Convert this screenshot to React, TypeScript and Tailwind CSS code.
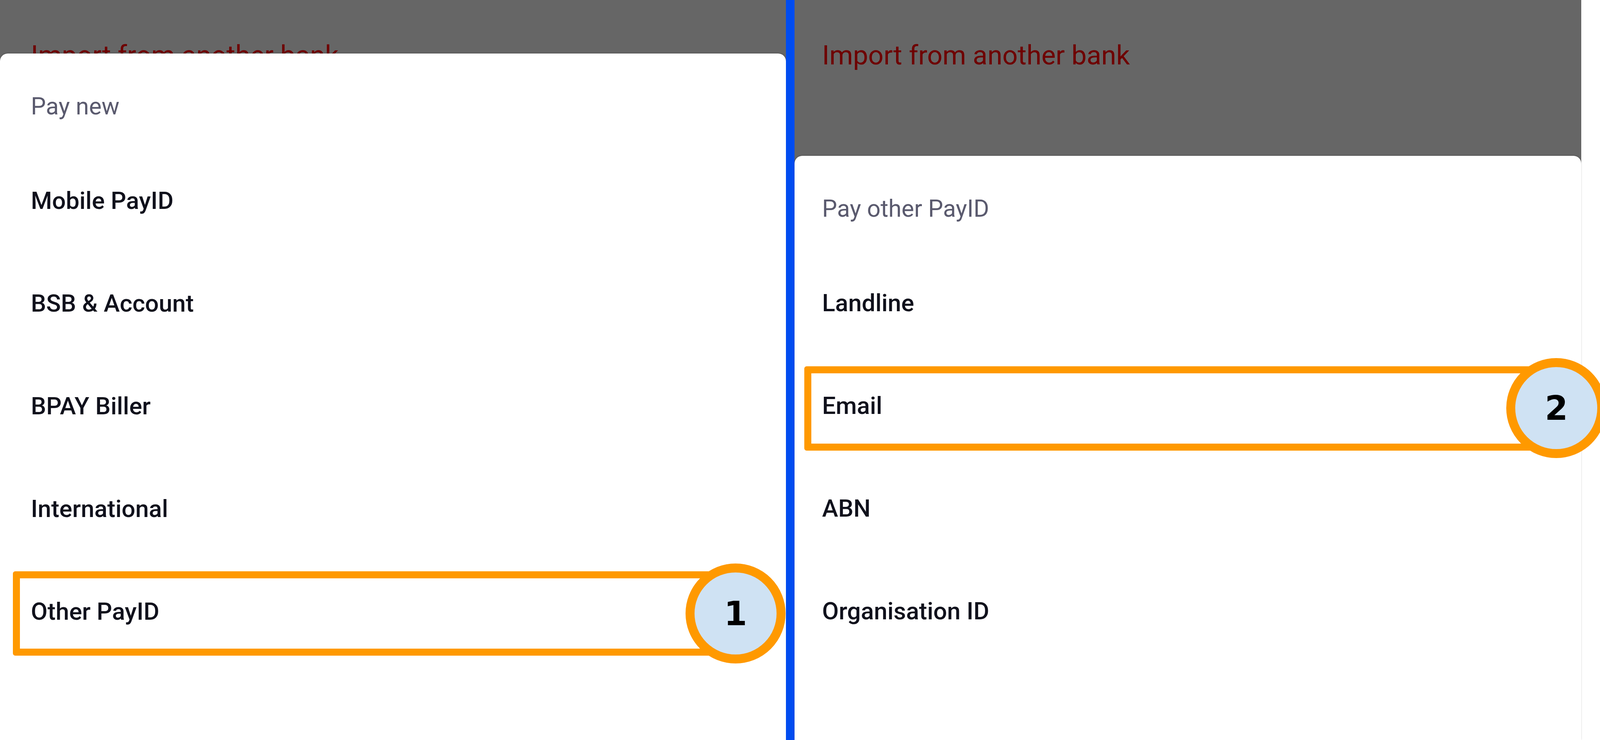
import React from "react";

type Marker = { n: number; box: string; circle: string };

const leftItems = ["Mobile PayID", "BSB & Account", "BPAY Biller", "International", "Other PayID"];
const rightItems = ["Landline", "Email", "ABN", "Organisation ID"];

// Orange highlight frame plus the numbered step bubble
const Callout: React.FC<Marker> = ({ n, box, circle }) => (
  <>
    <div className={`absolute h-[216px] rounded-[6px] border-[18px] border-[#ff9900] ${box}`} />
    <div
      className={`absolute flex h-[256px] w-[256px] items-center justify-center rounded-full border-[23px] border-[#ff9900] bg-[#cfe2f3] ${circle}`}
    >
      <span className="font-['DejaVu_Sans',sans-serif] text-[85px] font-bold leading-none text-black">{n}</span>
    </div>
  </>
);

const Sheet: React.FC<{
  title: string;
  items: string[];
  marked: string;
  marker: Marker;
  pad: string;
}> = ({ title, items, marked, marker, pad }) => (
  <div className="flex-1 rounded-t-[20px] bg-white shadow-[0_-1px_3px_rgba(0,0,0,0.25)]">
    <div className={`h-[245px] pt-[99px] text-[61px] leading-[72px] text-[#5a5a6e] ${pad}`}>{title}</div>
    {items.map((item) => (
      <div
        key={item}
        className={`relative h-[263px] whitespace-nowrap text-[62px] font-medium leading-[263px] text-[#10111c] ${pad}`}
      >
        {item}
        {item === marked && <Callout {...marker} />}
      </div>
    ))}
  </div>
);

const App: React.FC = () => {
  return (
    <div className="flex h-[1895px] w-full overflow-hidden bg-white font-['Roboto',sans-serif]">
      {/* Left screen */}
      <div className="flex w-[49.12%] shrink-0 flex-col bg-[#666666]">
        <div className="h-[137px] overflow-hidden whitespace-nowrap pl-[3.93%] pt-[102px] text-[69px] leading-[80px] text-[#6e0000]">
          Import from another bank
        </div>
        <Sheet
          title="Pay new"
          items={leftItems}
          marked="Other PayID"
          pad="pl-[3.93%]"
          marker={{ n: 1, box: "top-[29px] left-[1.65%] w-[91.34%]", circle: "top-[9px] left-[87.23%]" }}
        />
      </div>

      {/* Divider */}
      <div className="w-[0.53%] shrink-0 bg-[#004cf0]" />

      {/* Right screen */}
      <div className="flex w-[49.19%] shrink-0 flex-col bg-[#666666]">
        <div className="h-[399px] whitespace-nowrap pl-[3.52%] pt-[102px] text-[69px] leading-[80px] text-[#6e0000]">
          Import from another bank
        </div>
        <Sheet
          title="Pay other PayID"
          items={rightItems}
          marked="Email"
          pad="pl-[3.52%]"
          marker={{ n: 2, box: "top-[31px] left-[1.25%] w-[94.92%]", circle: "top-[10px] left-[90.46%]" }}
        />
      </div>
    </div>
  );
};

export default App;
